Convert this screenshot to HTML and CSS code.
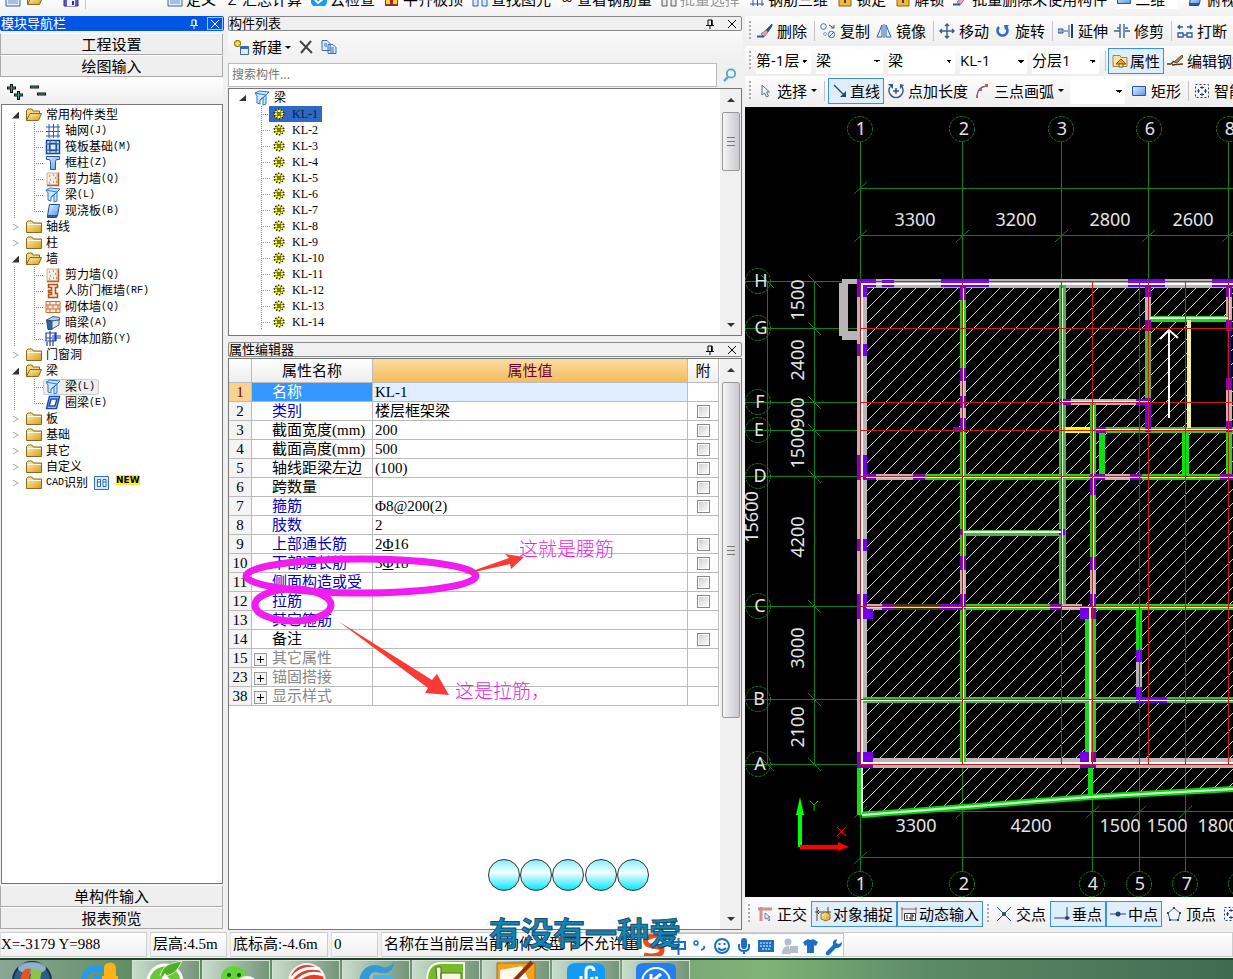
FILE: index.html
```html
<!DOCTYPE html>
<html lang="zh-CN">
<head>
<meta charset="utf-8">
<title>钢筋算量</title>
<link rel="stylesheet" href="styles.css">
</head>
<body>
<svg class="defs" aria-hidden="true">
  <defs>
    <linearGradient id="gold" x1="0" y1="0" x2="1" y2="1"><stop offset="0" stop-color="#fff3b8"/><stop offset="1" stop-color="#d99a1c"/></linearGradient>
    <linearGradient id="sky" x1="0" y1="0" x2="1" y2="1"><stop offset="0" stop-color="#e4f2ff"/><stop offset="1" stop-color="#5b94e2"/></linearGradient>
    <linearGradient id="bubble" x1="0" y1="0" x2="0" y2="1"><stop offset="0" stop-color="#7deefa"/><stop offset=".42" stop-color="#f4ffff"/><stop offset="1" stop-color="#00e4f8"/></linearGradient>
    <pattern id="hatch" width="14" height="14" patternUnits="userSpaceOnUse"><path d="M-1 15L15 -1M-1 1L1 -1M13 15L15 13" stroke="#d0d0d0" stroke-width="1" fill="none" shape-rendering="crispEdges"/></pattern>
    <symbol id="folder" viewBox="0 0 16 14"><path d="M.5 12.500V2.500L2 1h4l1.500 2H15.500v9.500z" fill="url(#gold)" stroke="#8a6a1d"/><path d="M1 4.500h14" stroke="#fff7cf"/></symbol>
    <symbol id="open" viewBox="0 0 16 14"><path d="M.5 12.500V2.500L2 1h4l1 2h6.500v3" fill="#f5d77c" stroke="#8a6a1d"/><path d="M.5 12.500L4 5.500h11.500L12.500 12.500z" fill="url(#gold)" stroke="#8a6a1d"/></symbol>
    <symbol id="gridi" viewBox="0 0 16 16"><path d="M4 1v14M8.500 1v14M13 1v14M1 4h14M1 8.500h14M1 13h14" stroke="#2858b8" fill="none"/></symbol>
    <symbol id="raft" viewBox="0 0 16 16"><path d="M1.500 1.500h13v13h-13zM4.500 4.500h7v7h-7z" fill="#dcecff" stroke="#173f91" stroke-width="1.500"/><path d="M1 5h14M1 11h14M5 1v14M11 1v14" stroke="#2858b8"/></symbol>
    <symbol id="column" viewBox="0 0 16 16"><path d="M1.500 1.500h13v3h-3l-1 2v8h-5v-8l-1-2h-3z" fill="url(#sky)" stroke="#2458ae"/></symbol>
    <symbol id="shear" viewBox="0 0 16 16"><path d="M2 2h10v12H2z" fill="#f6ede3" stroke="#ccb49c"/><path d="M13.500 1.500v13H2" fill="none" stroke="#b95c1c" stroke-width="1.500"/><path d="M4 5h1M8 4h1M10 7h1M5 9h1M8 11h1M4 12h1M11 11h1" stroke="#8a4b2a"/></symbol>
    <symbol id="beam" viewBox="0 0 16 16"><path d="M1 3l4-2 10 1-3 3v9l-3 1V8l-3 2v4l-3-1V6z" fill="#cfe7ff" stroke="#2b78d0"/><path d="M1 3l11 2M6 10l6-5M9 8l3-3" stroke="#2b78d0" fill="none"/></symbol>
    <symbol id="slab" viewBox="0 0 16 16"><path d="M4.500 1.500h10l-2 11h-10z" fill="url(#sky)" stroke="#1c4a9e"/><path d="M2.500 12.500v2h9l1-2" fill="#2c5cb0" stroke="#1c4a9e"/></symbol>
    <symbol id="ring" viewBox="0 0 16 16"><path d="M4.500 1.500h10l-3 12h-10zM6 4l-2 7h6l2-7z" fill="#cfe2ff" stroke="#1549b8" stroke-width="1.500"/></symbol>
    <symbol id="door" viewBox="0 0 16 16"><path d="M3.500 1.500h9v3h-2v6h2v4h-9v-3h3v-2h-3v-2h3v-3h-3z" fill="#fbe7d6" stroke="#b14e17" stroke-width="1.500"/></symbol>
    <symbol id="brick" viewBox="0 0 16 16"><path d="M1 2.500h14v11H1zM1 6h14M1 10h14M5 2v4M11 2v4M8 6v4M3 6v4M13 6v4M5 10v4M11 10v4" fill="#fff0e4" stroke="#cb6a2b"/></symbol>
    <symbol id="hidden" viewBox="0 0 16 16"><path d="M1.500 5L8 1.500l6.500 1V5L7 6z" fill="#b7cde8" stroke="#3d5f90"/><path d="M1.500 5L7 6v8.500H3z" fill="#31619f" stroke="#264a7c"/><path d="M7 6l7-1v5l-7 4z" fill="#dce9f9" stroke="#3d5f90"/></symbol>
    <symbol id="rebar" viewBox="0 0 16 16"><path d="M1 2h9v8H1zM5 0v15M7 5h9M11 1v9M1 7h15M2 15v-4M8 15V8" fill="none" stroke="#1e3fae" stroke-width="1.200"/></symbol>
    <symbol id="book" viewBox="0 0 16 16"><path d="M.5 1.500h14v13H.5z" fill="#d8eaff" stroke="#3d70b8"/><path d="M3.500 4.500h3v7h-3zM9 4.500h3v7H9zM3 7h4M9 7h3" fill="#fff" stroke="#2a66c4"/></symbol>
    <symbol id="gear" viewBox="0 0 12 12"><circle cx="6" cy="6" r="4.800" fill="#ff2" stroke="#222" stroke-width="1.500" stroke-dasharray="1.500 1.500"/><path d="M4.500 2v8M7.500 2v8M2 4.500h8M2 7.500h8" stroke="#554" stroke-width=".6"/><path d="M5 5h2v2H5z" fill="#ff0" stroke="#222" stroke-width=".7"/></symbol>
    <symbol id="pin" viewBox="0 0 10 10"><path d="M3 6V1h4v5M1 6.500h8M5 7v3" fill="none" stroke="currentColor"/><path d="M6 1h1.500v5H6z" fill="currentColor"/></symbol>
    <symbol id="cross" viewBox="0 0 10 10"><path d="M1 1l8 8M9 1L1 9" fill="none" stroke="currentColor"/></symbol>
    <symbol id="eraser" viewBox="0 0 16 16"><path d="M15 1L9 7l2 2 4-6z" fill="#2b4c8d" stroke="#233d70" stroke-width=".7"/><path d="M9 7L4 11l3 3 4-5z" fill="#e8a3b0" stroke="#7f5a6c" stroke-width=".8"/><path d="M0 13.500h7" stroke="#2458ae" stroke-width="2"/></symbol>
    <symbol id="copy" viewBox="0 0 16 16"><circle cx="3.500" cy="3.500" r="2.800" fill="none" stroke="#4f6b92"/><circle cx="11.500" cy="11.500" r="3.200" fill="none" stroke="#4f6b92"/><circle cx="5" cy="11" r="1.500" fill="none" stroke="#8ea3c0"/><path d="M9 2l5 3M14 2v3h-3M9 14l5-5" fill="none" stroke="#35588e"/></symbol>
    <symbol id="mirror" viewBox="0 0 16 16"><path d="M6 2v12H1zM10 2v12h5z" fill="#e3efff" stroke="#2e5cab"/><path d="M8 1v14" stroke="#2e5cab"/></symbol>
    <symbol id="move" viewBox="0 0 16 16"><path d="M8 1v14M1 8h14M6 3l2-2 2 2M6 13l2 2 2-2M3 6L1 8l2 2M13 6l2 2-2 2" fill="none" stroke="#3d5d8c" stroke-width="1.400"/></symbol>
    <symbol id="rotate" viewBox="0 0 16 16"><path d="M4 4a5 5 0 1 0 7 0" fill="none" stroke="#3768bf" stroke-width="2.600"/><path d="M9 2h5l-4 5z" fill="#3768bf"/></symbol>
    <symbol id="extend" viewBox="0 0 16 16"><path d="M0 6h5v4H0zM6 8h4M11 2v12" fill="#99b8e8" stroke="#2d57a5"/><path d="M14 1v14" stroke="#1b3e85" stroke-width="2"/></symbol>
    <symbol id="trim" viewBox="0 0 16 16"><path d="M0 8h6M6 1v14M10 1v14M3 5h3M11 8h5M11 5h3" fill="none" stroke="#3a629f" stroke-width="1.400"/></symbol>
    <symbol id="break" viewBox="0 0 16 16"><path d="M1 4h5M10 4h5M3 2L1 4l2 2M13 2l2 2-2 2M1 10h5v4H1zM10 10h5v4h-5zM6 12h4" fill="none" stroke="#31599b" stroke-width="1.300"/></symbol>
    <symbol id="props" viewBox="0 0 16 16"><path d="M1 2.500h7l1 2h6v9H1z" fill="#f8e3a5" stroke="#ad842e"/><path d="M4 11l5-5 5 5z" fill="#e0a72c" stroke="#745314"/><path d="M7 11h4v3H7z" fill="#fff3c4" stroke="#745314"/></symbol>
    <symbol id="edit" viewBox="0 0 16 16"><path d="M0 11h4l3-3M5 12c4 0 5-1 11-1" fill="none" stroke="#51391e" stroke-width="1.500"/><path d="M15 2l-8 7 3 1 6-6z" fill="#b48a4a" stroke="#493421" stroke-width=".8"/></symbol>
    <symbol id="pointer" viewBox="0 0 16 16"><path d="M5 2v10l2.500-2 2 4 2-1-2-4h3z" fill="#eff5ff" stroke="#5a6f91"/></symbol>
    <symbol id="line" viewBox="0 0 16 16"><path d="M2 2l11 11" stroke="#24457e" stroke-width="1.300"/><path d="M14 8v6H8z" fill="#24457e"/></symbol>
    <symbol id="ptlen" viewBox="0 0 16 16"><path d="M2 4a7 7 0 1 0 12 0M8 5v6M5 8h6" fill="none" stroke="#31548c" stroke-width="1.500"/><path d="M0 1h5v5zM16 2l-4 4V1z" fill="#31548c"/></symbol>
    <symbol id="arc" viewBox="0 0 16 16"><path d="M3 14C3 7 6 4 12 3" fill="none" stroke="#4f6fa0" stroke-width="1.300"/><path d="M2 12h2v3H2zM5 5h3v3H5zM11 1h3v3h-3z" fill="#df5450"/></symbol>
    <symbol id="rect" viewBox="0 0 16 16"><path d="M1.500 3.500h13v9h-13z" fill="url(#sky)" stroke="#2455ad"/></symbol>
    <symbol id="smart" viewBox="0 0 16 16"><path d="M1.500 1.500h13v13h-13z" fill="none" stroke="#223d66" stroke-dasharray="2 2"/><path d="M8 3v3M8 10v3M3 8h3M10 8h3M6 4.500h4M6 11.500h4M4.500 6v4M11.500 6v4" stroke="#223d66"/></symbol>
    <symbol id="ortho" viewBox="0 0 16 16"><path d="M1 3h14M4 1v14" stroke="#d58e8e" stroke-width="3"/><path d="M8 7v6l2-1 2 3 1-1-2-3h2z" fill="#e8effa" stroke="#536d92" stroke-width=".8"/></symbol>
    <symbol id="osnap" viewBox="0 0 16 16"><path d="M2 1v14M13 1v8M0 6h16M4 4L2 6l2 2" fill="none" stroke="#5d4138"/><path d="M6 8l4-2 5 2v5l-4 2-5-2z" fill="url(#gold)" stroke="#9a7321"/></symbol>
    <symbol id="dyn" viewBox="0 0 16 16"><path d="M0 3h16M1 1v13M15 1v7" fill="none" stroke="#a75b5b"/><path d="M3.500 7.500h11v7h-11z" fill="#fff" stroke="#333"/><path d="M6 9v4M9 9h3v2H9v2h3" fill="none" stroke="#111"/></symbol>
    <symbol id="cut" viewBox="0 0 16 16"><path d="M1 1l14 14M15 1L1 15" stroke="#24457e"/><circle cx="8" cy="8" r="2" fill="#24457e"/></symbol>
    <symbol id="perp" viewBox="0 0 16 16"><path d="M0 12h16M13 1v11" stroke="#24457e"/><circle cx="13" cy="12" r="2" fill="#24457e"/></symbol>
    <symbol id="mid" viewBox="0 0 16 16"><path d="M0 8h16" stroke="#24457e"/><circle cx="8" cy="8" r="2.500" fill="#24457e"/></symbol>
    <symbol id="vertex" viewBox="0 0 16 16"><path d="M8 2l6 5-2 7H4L2 7z" fill="none" stroke="#3d5f92"/><path d="M7 1h2v2H7zM13 6h2v2h-2zM1 6h2v2H1zM3 13h2v2H3zM11 13h2v2h-2z" fill="#24457e"/></symbol>
    <symbol id="doc" viewBox="0 0 16 16"><path d="M1 1h14v14H1z" fill="#e6f0fd" stroke="#35609f"/><path d="M3 10h10M3 12h10" stroke="#6b8fc4"/></symbol>
    <symbol id="save" viewBox="0 0 16 16"><path d="M1 1h14v14H1z" fill="#5a5fc4" stroke="#2c3190"/><path d="M4 9h8v6H4z" fill="#eef"/><path d="M9 10h2v4H9z" fill="#2c3190"/></symbol>
    <symbol id="lock" viewBox="0 0 16 16"><path d="M2 5h12v10H2z" fill="#eeb83c" stroke="#8d6514"/><path d="M7 8h2v4H7z" fill="#5b3f08"/></symbol>
    <symbol id="cloud" viewBox="0 0 16 16"><path d="M0 0h16v12l-2 3H2l-2-3z" fill="#1e9be8"/><path d="M4 9l3 3 6-5" fill="none" stroke="#fff" stroke-width="2"/></symbol>
    <symbol id="top" viewBox="0 0 16 16"><path d="M1 3h13v12H1z" fill="#a42d1f"/><path d="M2 8h4v5H2zM9 6h4v7H9z" fill="#ffd33b"/></symbol>
    <symbol id="find" viewBox="0 0 16 16"><path d="M1 3h5v12H1zM10 3h5v12h-5zM6 7h4" fill="#dce9ff" stroke="#2e5cab"/></symbol>
  </defs>
</svg>

<div class="app">
  <header class="menubar">
    <div class="menurow">
      <span class="files"><svg class="i"><use href="#doc"/></svg><svg class="i"><use href="#open"/></svg><svg class="i save"><use href="#save"/></svg><i class="sep"></i></span>
      <button><svg class="i"><use href="#doc"/></svg>定义</button>
      <button><b>Σ</b>汇总计算</button>
      <button><svg class="i"><use href="#cloud"/></svg>云检查</button>
      <button><svg class="i"><use href="#top"/></svg>平齐板顶</button>
      <button><svg class="i"><use href="#find"/></svg>查找图元</button>
      <button><b>∞</b>查看钢筋量</button>
      <button class="off"><svg class="i"><use href="#find"/></svg>批量选择</button>
      <button><svg class="i"><use href="#gridi"/></svg>钢筋三维</button>
      <button><svg class="i"><use href="#lock"/></svg>锁定</button>
      <button><svg class="i"><use href="#lock"/></svg>解锁</button>
      <button><svg class="i"><use href="#eraser"/></svg>批量删除未使用构件</button>
      <button class="view"><svg class="i"><use href="#rect"/></svg>二维</button>
      <button><svg class="i"><use href="#slab"/></svg>俯视</button>
    </div>
  </header>

  <main class="main">
    <aside class="nav">
      <h2 class="title active"><span>模块导航栏</span><svg class="s"><use href="#pin"/></svg><button class="close" aria-label="关闭"><svg class="s"><use href="#cross"/></svg></button></h2>
      <button class="wide">工程设置</button>
      <button class="wide">绘图输入</button>
      <div class="navtools"><svg viewBox="0 0 44 18" width="44" height="18"><path d="M1 5h9M5.500 1v9M8 12h9M12.500 8v9M24 4h9M31 11h9" stroke="#111" stroke-width="3"/><path d="M2 5h7M5.500 2v7M9 12h7M12.500 9v7M25 4h7M32 11h7" stroke="#3fa08a" stroke-width="1"/></svg></div>
      <ul class="tree">
        <li class="g o"><svg class="f"><use href="#open"/></svg>常用构件类型</li>
        <li class="c"><svg class="k"><use href="#gridi"/></svg>轴网<kbd>(J)</kbd></li>
        <li class="c"><svg class="k"><use href="#raft"/></svg>筏板基础<kbd>(M)</kbd></li>
        <li class="c"><svg class="k"><use href="#column"/></svg>框柱<kbd>(Z)</kbd></li>
        <li class="c"><svg class="k"><use href="#shear"/></svg>剪力墙<kbd>(Q)</kbd></li>
        <li class="c"><svg class="k"><use href="#beam"/></svg>梁<kbd>(L)</kbd></li>
        <li class="c last"><svg class="k"><use href="#slab"/></svg>现浇板<kbd>(B)</kbd></li>
        <li class="g"><svg class="f"><use href="#folder"/></svg>轴线</li>
        <li class="g"><svg class="f"><use href="#folder"/></svg>柱</li>
        <li class="g o"><svg class="f"><use href="#open"/></svg>墙</li>
        <li class="c"><svg class="k"><use href="#shear"/></svg>剪力墙<kbd>(Q)</kbd></li>
        <li class="c"><svg class="k"><use href="#door"/></svg>人防门框墙<kbd>(RF)</kbd></li>
        <li class="c"><svg class="k"><use href="#brick"/></svg>砌体墙<kbd>(Q)</kbd></li>
        <li class="c"><svg class="k"><use href="#hidden"/></svg>暗梁<kbd>(A)</kbd></li>
        <li class="c last"><svg class="k"><use href="#rebar"/></svg>砌体加筋<kbd>(Y)</kbd></li>
        <li class="g"><svg class="f"><use href="#folder"/></svg>门窗洞</li>
        <li class="g o"><svg class="f"><use href="#open"/></svg>梁</li>
        <li class="c"><span class="hot"><svg class="k"><use href="#beam"/></svg>梁<kbd>(L)</kbd></span></li>
        <li class="c last"><svg class="k"><use href="#ring"/></svg>圈梁<kbd>(E)</kbd></li>
        <li class="g"><svg class="f"><use href="#folder"/></svg>板</li>
        <li class="g"><svg class="f"><use href="#folder"/></svg>基础</li>
        <li class="g"><svg class="f"><use href="#folder"/></svg>其它</li>
        <li class="g"><svg class="f"><use href="#folder"/></svg>自定义</li>
        <li class="g"><svg class="f"><use href="#folder"/></svg><kbd>CAD</kbd>识别<svg class="k book"><use href="#book"/></svg><em>NEW</em></li>
      </ul>
      <button class="wide">单构件输入</button>
      <button class="wide">报表预览</button>
    </aside>

    <div class="middle">
      <section class="list">
        <h2 class="title"><span>构件列表</span><svg class="s"><use href="#pin"/></svg><button class="close" aria-label="关闭"><svg class="s"><use href="#cross"/></svg></button></h2>
        <div class="listtools">
          <button><svg class="i" viewBox="0 0 16 16"><path d="M4.500 1v7M1 4.500h7" stroke="#9a7a12" stroke-width="4"/><path d="M4.500 2v5M2 4.500h5" stroke="#ffe45c" stroke-width="2"/><path d="M7.500 7.500h8v8h-8z" fill="#dfeaff" stroke="#3b69b4"/><path d="M8 9h7" stroke="#3b69b4" stroke-width="2"/></svg>新建<i class="arr"></i></button>
          <button aria-label="删除"><svg width="14" height="14" viewBox="0 0 14 14"><path d="M1 1l12 12M12 1L2 13" stroke="#444" stroke-width="2" fill="none"/></svg></button>
          <button aria-label="复制"><svg class="i" viewBox="0 0 16 16"><path d="M1 1.500h5l3 3v7H1zM7 5.500h5l3 3v6H7z" fill="#dfecff" stroke="#3b69b4"/><path d="M3 5h3M3 7h3M9 9h4M9 11h4M9 13h4" stroke="#3b69b4"/></svg></button>
        </div>
        <div class="search"><input type="text" aria-label="搜索构件" placeholder="搜索构件..."><button aria-label="搜索"><svg width="14" height="14" viewBox="0 0 14 14"><circle cx="8" cy="5.500" r="4.200" fill="#eefaff" stroke="#4aa5d8" stroke-width="1.800"/><path d="M5 9l-4 4" stroke="#4aa5d8" stroke-width="2.400"/></svg></button></div>
        <div class="listbox">
          <ul class="items">
            <li class="root"><svg class="k"><use href="#beam"/></svg>梁</li>
            <li><span class="sel"><svg class="w"><use href="#gear"/></svg>KL-1</span></li>
            <li><svg class="w"><use href="#gear"/></svg>KL-2</li>
            <li><svg class="w"><use href="#gear"/></svg>KL-3</li>
            <li><svg class="w"><use href="#gear"/></svg>KL-4</li>
            <li><svg class="w"><use href="#gear"/></svg>KL-5</li>
            <li><svg class="w"><use href="#gear"/></svg>KL-6</li>
            <li><svg class="w"><use href="#gear"/></svg>KL-7</li>
            <li><svg class="w"><use href="#gear"/></svg>KL-8</li>
            <li><svg class="w"><use href="#gear"/></svg>KL-9</li>
            <li><svg class="w"><use href="#gear"/></svg>KL-10</li>
            <li><svg class="w"><use href="#gear"/></svg>KL-11</li>
            <li><svg class="w"><use href="#gear"/></svg>KL-12</li>
            <li><svg class="w"><use href="#gear"/></svg>KL-13</li>
            <li><svg class="w"><use href="#gear"/></svg>KL-14</li>
          </ul>
          <div class="bar"><i class="up"></i><span class="thumb short"></span><i class="down"></i></div>
        </div>
      </section>

      <section class="props">
        <h2 class="title"><span>属性编辑器</span><svg class="s"><use href="#pin"/></svg><button class="close" aria-label="关闭"><svg class="s"><use href="#cross"/></svg></button></h2>
        <div class="propbox">
          <table>
            <colgroup><col class="c1"><col class="c2"><col><col class="c4"></colgroup>
            <thead><tr><th></th><th>属性名称</th><th class="val">属性值</th><th>附</th></tr></thead>
            <tbody>
              <tr class="cur"><th>1</th><td>名称</td><td>KL-1</td><td></td></tr>
              <tr class="b"><th>2</th><td>类别</td><td>楼层框架梁</td><td><input type="checkbox" aria-label="类别 附加"></td></tr>
              <tr><th>3</th><td>截面宽度(mm)</td><td>200</td><td><input type="checkbox" aria-label="截面宽度 附加"></td></tr>
              <tr><th>4</th><td>截面高度(mm)</td><td>500</td><td><input type="checkbox" aria-label="截面高度 附加"></td></tr>
              <tr><th>5</th><td>轴线距梁左边</td><td>(100)</td><td><input type="checkbox" aria-label="轴线距梁左边 附加"></td></tr>
              <tr><th>6</th><td>跨数量</td><td></td><td><input type="checkbox" aria-label="跨数量 附加"></td></tr>
              <tr class="b"><th>7</th><td>箍筋</td><td>Φ8@200(2)</td><td><input type="checkbox" aria-label="箍筋 附加"></td></tr>
              <tr class="b"><th>8</th><td>肢数</td><td>2</td><td></td></tr>
              <tr class="b"><th>9</th><td>上部通长筋</td><td>2<u>Φ</u>16</td><td><input type="checkbox" aria-label="上部通长筋 附加"></td></tr>
              <tr class="b"><th>10</th><td>下部通长筋</td><td>3<u>Φ</u>18</td><td><input type="checkbox" aria-label="下部通长筋 附加"></td></tr>
              <tr class="b"><th>11</th><td>侧面构造或受</td><td></td><td><input type="checkbox" aria-label="侧面构造或受 附加"></td></tr>
              <tr class="b"><th>12</th><td>拉筋</td><td></td><td><input type="checkbox" aria-label="拉筋 附加"></td></tr>
              <tr class="b"><th>13</th><td>其它箍筋</td><td></td><td></td></tr>
              <tr><th>14</th><td>备注</td><td></td><td><input type="checkbox" aria-label="备注 附加"></td></tr>
              <tr class="grp"><th>15</th><td><button aria-label="展开"><svg width="9" height="9" viewBox="0 0 9 9"><path d="M1 4.500h7M4.500 1v7" stroke="#000"/></svg></button>其它属性</td><td></td><td></td></tr>
              <tr class="grp"><th>23</th><td><button aria-label="展开"><svg width="9" height="9" viewBox="0 0 9 9"><path d="M1 4.500h7M4.500 1v7" stroke="#000"/></svg></button>锚固搭接</td><td></td><td></td></tr>
              <tr class="grp"><th>38</th><td><button aria-label="展开"><svg width="9" height="9" viewBox="0 0 9 9"><path d="M1 4.500h7M4.500 1v7" stroke="#000"/></svg></button>显示样式</td><td></td><td></td></tr>
            </tbody>
          </table>
          <div class="bar"><i class="up"></i><span class="thumb long"></span><i class="down"></i></div>
        </div>
      </section>
    </div>

    <div class="right">
      <div class="tb">
        <i class="grip"></i>
        <button><svg class="i"><use href="#eraser"/></svg>删除</button><i class="sep"></i>
        <button><svg class="i"><use href="#copy"/></svg>复制</button>
        <button><svg class="i"><use href="#mirror"/></svg>镜像</button><i class="sep"></i>
        <button><svg class="i"><use href="#move"/></svg>移动</button>
        <button><svg class="i"><use href="#rotate"/></svg>旋转</button><i class="sep"></i>
        <button><svg class="i"><use href="#extend"/></svg>延伸</button>
        <button><svg class="i"><use href="#trim"/></svg>修剪</button><i class="sep"></i>
        <button><svg class="i"><use href="#break"/></svg>打断</button>
      </div>
      <div class="tb picks">
        <i class="grip"></i>
        <select class="narrow" aria-label="楼层"><option>第-1层</option></select>
        <select aria-label="构件大类"><option>梁</option></select>
        <select aria-label="构件类型"><option>梁</option></select>
        <select aria-label="构件"><option>KL-1</option></select>
        <select aria-label="分层"><option>分层1</option></select><i class="sep"></i>
        <button class="on"><svg class="i"><use href="#props"/></svg>属性</button>
        <button><svg class="i"><use href="#edit"/></svg>编辑钢筋</button>
      </div>
      <div class="tb">
        <i class="grip"></i>
        <button><svg class="i"><use href="#pointer"/></svg>选择<i class="arr"></i></button><i class="sep"></i>
        <button class="on"><svg class="i"><use href="#line"/></svg>直线</button>
        <button><svg class="i"><use href="#ptlen"/></svg>点加长度</button>
        <button><svg class="i"><use href="#arc"/></svg>三点画弧<i class="arr"></i></button>
        <select class="narrow" aria-label="画弧方式"><option></option></select>
        <button><svg class="i"><use href="#rect"/></svg>矩形</button><i class="sep"></i>
        <button><svg class="i"><use href="#smart"/></svg>智能布置</button>
      </div>

      <div class="canvas">
        <svg class="cad" role="img" aria-label="梁平面图">
          <g transform="translate(-745 -107)">
            <g class="axis">
              <path d="M860.500 142V872M962.500 142V872M1061.500 142V282M1148.500 142V282M1228.500 142V282M1092.500 764V872M1139.500 764V872M1185.500 764V872"/>
              <path d="M860 188.500H2400M860 235.500H2400M860 811.500H2400M860 857.500H2400"/>
              <path d="M745 281.500H860M745 328.500H860M745 402.500H860M745 430.500H860M745 476.500H860M745 606.500H860M745 699.500H860M745 764.500H860M767.500 281V764M814.500 281V764"/>
              <path d="M854 194l13-12M854 242l13-12M956 242l13-12M1055 242l13-12M1142 242l13-12M1222 242l13-12M854 818l13-12M956 818l13-12M1086 818l13-12M1133 818l13-12M1179 818l13-12M854 864l13-12"/>
              <path d="M808 275l13 13M808 322l13 13M808 396l13 13M808 424l13 13M808 470l13 13M808 600l13 13M808 693l13 13M808 758l13 13M761 275l13 13M761 758l13 13"/>
              <g class="rings"><circle cx="860" cy="129" r="12.500"/><circle cx="962" cy="129" r="12.500"/><circle cx="1061" cy="129" r="12.500"/><circle cx="1149" cy="129" r="12.500"/><circle cx="1229" cy="129" r="12.500"/>
              <circle cx="860" cy="884" r="12.500"/><circle cx="962" cy="884" r="12.500"/><circle cx="1092" cy="884" r="12.500"/><circle cx="1139" cy="884" r="12.500"/><circle cx="1185" cy="884" r="12.500"/><circle cx="1241" cy="884" r="12.500"/>
              <circle cx="758" cy="281" r="12.500"/><circle cx="758" cy="328" r="12.500"/><circle cx="758" cy="402" r="12.500"/><circle cx="758" cy="430" r="12.500"/><circle cx="758" cy="476" r="12.500"/><circle cx="758" cy="606" r="12.500"/><circle cx="758" cy="699" r="12.500"/><circle cx="758" cy="764" r="12.500"/></g>
            </g>
            <path d="M863 284H1233V789L1090 797L863 815z" fill="url(#hatch)"/>
            <path d="M1190 322h37v106h-37z" fill="#000"/>
            <g class="gray">
              <path d="M842 279h18v5h-18zM839 283h9v53h-9zM842 331h16v9h-16z"/>
              <path d="M857 279h10v486h-10zM857 279h376v9H857zM857 758h376v10H857z"/>
              <path d="M960 381h6v37h-6zM960 569h6v26h-6zM1145 297h6v24h-6zM1226 297h6v24h-6zM1226 389h6v34h-6zM1060 399h90v6h-90zM866 474h50v6h-50zM1104 474h28v6h-28zM866 604h20v6h-20zM1060 604h22v6h-22zM1090 569h6v26h-6zM1136 661h6v28h-6z"/>
            </g>
            <g class="green">
              <path d="M960 300h6v68h-6zM960 432h6v124h-6zM960 609h6v153h-6zM1090 403h6v72h-6zM1090 495h6v62h-6zM1085 619h11v133h-11zM1088 768h5v28h-5zM1099 433h6v42h-6zM1150 316h78v6h-78zM1226 432h6v42h-6zM1182 432h7v42h-7zM925 474h165v6H925zM1142 474h78v6h-78zM963 604h88v6h-88zM1096 604h137v6h-137zM1136 610h6v40h-6zM857 768h6v47h-6z"/>
            </g>
            <g class="moss"><path d="M1059 284h7v320h-7zM1145 331h6v67h-6zM1106 427h127v6h-127zM963 530h98v6h-98zM863 697h370v6H863z"/></g>
            <path d="M894 604h47v6h-47z" fill="#1d4a00"/>
            <path d="M1065 427h25v6h-25z" fill="#ff0"/>
            <path d="M1187 320h4v108h-4z" fill="#f4f09a"/>
            <path d="M1227 331h4v47h-4z" fill="#180090"/>
            <g class="purple">
              <path d="M857 281h10v16h-10zM857 344h10v12h-10zM857 455h10v25h-10zM857 539h10v12h-10zM857 594h10v25h-10zM863 609h10v10h-10zM857 752h16v10h-16zM857 762h16v6h-16z"/>
              <path d="M857 279h19v8h-19zM882 280h12v7h-12zM941 279h48v8h-48zM1128 279h37v8h-37zM1212 279h21v8h-21z"/>
              <path d="M960 287h6v13h-6zM960 368h6v13h-6zM960 396h6v12h-6zM960 418h6v14h-6zM953 427h8v5h-8zM960 556h6v14h-6zM960 594h6v15h-6zM1145 287h6v10h-6zM1145 320h6v11h-6zM1145 398h6v34h-6zM1226 287h6v10h-6zM1226 320h6v11h-6zM1226 378h6v12h-6zM1226 421h6v11h-6z"/>
              <path d="M1060 399h11v6h-11zM1136 399h14v6h-14zM1096 427h10v6h-10zM867 474h9v6h-9zM913 474h12v6h-12zM1090 474h15v6h-15zM1130 474h12v6h-12zM1220 474h13v6h-13zM1090 475h6v20h-6zM1090 557h6v13h-6zM1090 594h6v25h-6zM1080 608h16v11h-16zM1080 752h16v16h-16zM882 604h12v6h-12zM940 604h23v6h-23zM1050 604h12v6h-12zM1136 650h6v12h-6zM1136 687h6v14h-6zM1136 697h31v6h-31zM1059 529h6v6h-6zM960 529h3v6h-3z"/>
            </g>
            <g class="white">
              <path d="M862 284H1233M862 283V763H1233M862 768V814M1090 608V762M1150 318H1228M963 532H1061" class="double"/>
              <path d="M963.500 288V763M1062.500 288V604M1148.500 288V430M1229.500 288V320M1093.500 405V606M1060 401.500H1150M1096 429.500H1233M866 477.500H1233M866 607.500H1233M863 700.500H1233M1139.500 608V700M1185.500 433V475"/>
            </g>
            <path class="red" d="M860.500 281V764M962.500 281V764M1061.500 281V764M1092.500 281V764M1139.500 281V764M1148.500 281V764M1185.500 281V764M1228.500 281V764M860 281.500H1233M860 328.500H1233M860 402.500H1233M860 430.500H1233M860 476.500H1233M860 606.500H1233M860 699.500H1233M860 764.500H1233"/>
            <path d="M862 815L1090 797L1233 789" fill="none" stroke="#00e000" stroke-width="6"/><path d="M862 815L1090 797L1233 789" fill="none" stroke="#eafff0" stroke-width="2"/>
            <path d="M1169 418V330M1160 339L1169 330L1178 338" fill="none" stroke="#fff" stroke-width="2"/>
            <path d="M798 847V815h-2l4-18 4 18h-2V847z" fill="#0f0"/><path d="M800 845H838v-3l11 5-11 4v-2H800z" fill="#f00"/>
            <path d="M810 801l4 4 4-4M814 805v6" fill="none" stroke="#0c0"/><path d="M837 827l9 9M846 827l-9 9" fill="none" stroke="#f00"/>
            <g class="dims">
              <text x="861" y="135">1</text><text x="964" y="135">2</text><text x="1062" y="135">3</text><text x="1150" y="135">6</text><text x="1230" y="135">8</text>
              <text x="915" y="226">3300</text><text x="1016" y="226">3200</text><text x="1110" y="226">2800</text><text x="1193" y="226">2600</text>
              <text x="916" y="832">3300</text><text x="1031" y="832">4200</text><text x="1120" y="832">1500</text><text x="1167" y="832">1500</text><text x="1218" y="832">1800</text>
              <text x="861" y="890">1</text><text x="964" y="890">2</text><text x="1093" y="890">4</text><text x="1140" y="890">5</text><text x="1187" y="890">7</text>
              <text x="761" y="287">H</text><text x="761" y="334">G</text><text x="760" y="408">F</text><text x="759" y="436">E</text><text x="760" y="482">D</text><text x="760" y="612">C</text><text x="759" y="705">B</text><text x="760" y="770">A</text>
              <text transform="translate(804 300) rotate(-90)">1500</text><text transform="translate(804 360) rotate(-90)">2400</text><text transform="translate(804 413) rotate(-90)">900</text><text transform="translate(804 448) rotate(-90)">1500</text><text transform="translate(804 537) rotate(-90)">4200</text><text transform="translate(804 648) rotate(-90)">3000</text><text transform="translate(804 727) rotate(-90)">2100</text><text transform="translate(758 517) rotate(-90)">15600</text>
            </g>
          </g>
        </svg>
      </div>

      <div class="tb snap">
        <i class="grip"></i>
        <button><svg class="i"><use href="#ortho"/></svg>正交</button>
        <div class="pair"><button class="on"><svg class="i"><use href="#osnap"/></svg>对象捕捉</button><button class="on"><svg class="i"><use href="#dyn"/></svg>动态输入</button></div>
        <i class="grip"></i>
        <button><svg class="i"><use href="#cut"/></svg>交点</button>
        <div class="pair"><button class="on"><svg class="i"><use href="#perp"/></svg>垂点</button><button class="on"><svg class="i"><use href="#mid"/></svg>中点</button></div>
        <button><svg class="i"><use href="#vertex"/></svg>顶点</button>
        <button><svg class="i"><use href="#smart"/></svg>坐标</button>
      </div>
    </div>
  </main>

  <footer class="status">
    <span class="xy">X=-3179 Y=988</span><span class="fl">层高:4.5m</span><span class="el">底标高:-4.6m</span><span class="n">0</span><span class="msg">名称在当前层当前构件类型下不允许重</span>
  </footer>

  <nav class="taskbar" aria-label="任务栏">
    <button class="plain start" aria-label="开始"><svg width="42" height="21" viewBox="0 0 42 21"><circle cx="21" cy="22" r="19" fill="#2c5f86" stroke="#14354f" stroke-width="2"/><ellipse cx="21" cy="9" rx="14" ry="6" fill="#b9d6e6" opacity=".7"/><path d="M12 12c3-3 6-3 8-2l-2 11h-9z" fill="#e8541f"/><path d="M21 10c4 2 7 2 10 0l-2 11H19z" fill="#8cc63e"/></svg></button>
    <button class="plain" aria-label="浏览器"><svg width="42" height="21" viewBox="0 0 42 21"><path d="M28 9C18 2 5 8 4 21h6c1-8 8-10 15-6z" fill="#259bea"/><path d="M17 16h12v5H17z" fill="#259bea"/><path d="M27 17V9c0-7 12-7 12 0v8h2v3H25v-3z" fill="#ffb115"/></svg></button>
    <button aria-label="应用"><svg width="42" height="21" viewBox="0 0 42 21"><circle cx="20" cy="22" r="17" fill="#6bc53a" stroke="#fff" stroke-width="3"/><path d="M15 16C18 5 25 3 37 1c-5 10-8 14-18 15" fill="#4fae2c" stroke="#d7f3bd"/><path d="M15 21l5-8 6 8z" fill="#fff"/></svg></button>
    <button aria-label="微信"><svg width="42" height="21" viewBox="0 0 42 21"><ellipse cx="19" cy="18" rx="13" ry="12" fill="#65d43a"/><circle cx="14" cy="15" r="2" fill="#174d10"/><circle cx="24" cy="15" r="2" fill="#174d10"/><ellipse cx="32" cy="24" rx="10" ry="8" fill="#f4f4f4"/></svg></button>
    <button aria-label="应用"><svg width="42" height="21" viewBox="0 0 42 21"><circle cx="22" cy="22" r="18" fill="#d9412b" stroke="#eee" stroke-width="2"/><path d="M6 19C14 9 22 7 35 9M11 22C18 14 28 11 38 15" fill="none" stroke="#fff" stroke-width="3"/></svg></button>
    <button aria-label="应用"><svg width="42" height="21" viewBox="0 0 42 21"><path d="M4 21C6 7 17 2 28 7c4 1 7-1 11-4-1 10-9 12-18 9-5 0-7 4-7 9z" fill="#3499d5"/><path d="M18 15h20v6H18z" fill="#56afd9"/></svg></button>
    <button aria-label="应用"><svg width="42" height="21" viewBox="0 0 42 21"><path d="M2 21C2 8 8 3 16 3h23v18z" fill="#78b929" stroke="#f4ffe8" stroke-width="2"/><path d="M11 7h5v14h-4zM16 13h20v8H16z" fill="#f3f7df" stroke="#486e1c"/></svg></button>
    <button aria-label="应用"><svg width="42" height="21" viewBox="0 0 42 21"><path d="M2 3h38v18H2z" fill="#f5a11b" stroke="#b66a09"/><path d="M5 10l22-4 7 15H5z" fill="#fffaf0"/><path d="M37 2L19 21" stroke="#8c3111" stroke-width="4"/></svg></button>
    <button aria-label="应用"><svg width="42" height="21" viewBox="0 0 42 21"><path d="M2 21V11q0-8 9-8h20q9 0 9 8v10z" fill="#139bf4"/><path d="M16 21v-5M21 21V11q0-4 4-4t4 4M27 21v-4M33 18h-3" fill="none" stroke="#fff" stroke-width="3"/></svg></button>
    <button aria-label="应用"><svg width="42" height="21" viewBox="0 0 42 21"><path d="M1 21V9q0-6 8-6h24q8 0 8 6v12z" fill="#237ff0"/><circle cx="21" cy="22" r="14" fill="none" stroke="#fff" stroke-width="2"/><path d="M16 14v7M26 14l-9 7" stroke="#fff" stroke-width="3"/></svg></button>
  </nav>

  <svg class="notes" role="img" aria-label="批注">
    <ellipse cx="361" cy="576" rx="115" ry="17" class="loop"/><ellipse cx="293" cy="605" rx="38" ry="16" class="loop"/>
    <path d="M461 575L509 558L505 554L524 557L511 569L510 564z" fill="#fa3a34"/><path d="M338 621L432 680L437 674L449 695L425 693L428 688z" fill="#fa3a34"/>
    <text x="519" y="556">这就是腰筋</text><text x="455" y="698">这是拉筋，</text>
    <g fill="url(#bubble)" stroke="#333"><circle cx="504" cy="875" r="15.500"/><circle cx="536" cy="875" r="15.500"/><circle cx="568" cy="875" r="15.500"/><circle cx="601" cy="875" r="15.500"/><circle cx="633" cy="875" r="15.500"/></g>
  </svg>
  <div class="ime">
    <svg width="203" height="22" viewBox="0 0 203 22"><path d="M26 3C15-1 3 3 6 9s16 1 16 7-10 7-18 5" fill="none" stroke="#f04a13" stroke-width="5"/>
      <g fill="none" stroke="#1d6fc0" stroke-width="2"><path d="M32 8h13v7H32zM38.500 4v17"/><circle cx="56" cy="9" r="2" stroke-width="1.500"/><path d="M64 12q1 3-3 4"/><circle cx="82" cy="12" r="7"/><path d="M78 14q4 4 8 0M79.500 9v2M84.500 9v2M99 10v3q0 4 5 4t5-4v-3M104 17v3"/></g>
      <path d="M101 7q0-3 3-3t3 3v5q0 3-3 3t-3-3zM118 6h16v12h-16z" fill="#1d6fc0"/><path d="M120 9h12M120 12h12M122 15h8" stroke="#fff" stroke-dasharray="2 1"/>
      <g fill="#b4bfca"><circle cx="148" cy="8" r="3.500"/><path d="M142 20q0-8 7-8l2 8zM150 12h8v7h-8z"/></g>
      <path d="M163 8l5-3q3 2 5 0l5 3-2 4-2-1v8h-7v-8l-2 1z" fill="#1d6fc0"/><path d="M186 18l7-7q-1-5 4-6l-1 4 3 1 3-2q0 6-6 6l-7 7q-4 1-3-3z" fill="#1d6fc0"/></svg>
  </div>
  <p class="lyric">有没有一种爱</p>
</div>
</body>
</html>
```
FILE: styles.css
```css
* { box-sizing: border-box; }
body { margin: 0; background: #f0f0f0; color: #000; font: 15px/20px "Open Sans", "Noto Sans CJK SC", sans-serif; }
button, input, select { font: inherit; color: inherit; }
button { display: inline-flex; align-items: center; gap: 4px; margin: 0; padding: 0; border: 0; background: none; white-space: nowrap; }
ul, h2, p { margin: 0; padding: 0; list-style: none; font-weight: 400; }
svg { display: block; flex: none; }
.defs { position: absolute; width: 0; height: 0; }
.i { width: 16px; height: 16px; }
.s { width: 10px; height: 10px; }
.app { position: relative; display: flex; flex-direction: column; min-height: 100vh; overflow: hidden; }

.menubar { height: 16px; overflow: hidden; background: linear-gradient(#fdfdfd, #f0f0f0); }
.menurow { display: flex; gap: 9px; margin-top: -11px; padding-left: 5px; }
.menurow button { gap: 3px; flex: none; }
.menurow b { width: 14px; font-weight: 400; }
.files { display: flex; flex: none; align-items: center; gap: 6px; width: 153px; }
.files .save { margin-left: 14px; }
.off { color: #999; filter: grayscale(1); }
.view { padding-right: 13px; background: #fff; }
.sep { width: 1px; height: 20px; flex: none; background: #c4c4c4; }
.arr { border: 3px solid transparent; border-top-color: #000; border-bottom: 0; }

.main { flex: 1; display: flex; }
.nav { width: 224px; margin-right: 4px; padding-bottom: 2px; display: flex; flex-direction: column; }
.title { display: flex; align-items: center; gap: 12px; height: 15px; padding-right: 4px; border: 1px solid #888; border-radius: 2px; font: 13px/13px "Liberation Serif", "Noto Sans CJK SC", sans-serif; }
.title span { flex: 1; }
.title.active { gap: 8px; background: #0055e5; border-color: #0055e5; color: #fff; padding-right: 0; margin-bottom: 2px; }
.active .close { width: 16px; height: 13px; justify-content: center; border: 1px solid #a9c7ff; }
.wide { justify-content: center; height: 22px; margin-right: 1px; padding-bottom: 1px; border: 1px solid #aaa; border-top-color: #fff; background: #efefef; font-family: "Noto Sans CJK SC", sans-serif; }
.navtools { height: 27px; padding: 6px; background: linear-gradient(#fff, #eee); margin-right: 1px; }
.tree { flex: 1; margin: 0 1px 1px; padding: 2px 0; border: 1px solid #777; background: #fff; font: 12px/16px "Liberation Serif", "Noto Sans CJK SC", sans-serif; }
.tree li { display: flex; align-items: center; height: 16px; }
.tree kbd { font: 10px/16px "Liberation Mono", monospace; }
.f { width: 16px; height: 14px; margin-right: 4px; }
.k { width: 16px; height: 16px; margin-right: 4px; }
.g::before { content: ""; width: 7px; height: 7px; margin: 0 7px 0 10px; background: #aaa; clip-path: polygon(15% 0, 100% 50%, 15% 100%, 15% 85%, 75% 50%, 15% 15%); }
.g.o::before { background: #333; clip-path: polygon(100% 0, 100% 100%, 0 100%); }
.c { background: repeating-linear-gradient(90deg, #888 0 1px, transparent 1px 2px) 32px 8px / 10px 1px no-repeat, repeating-linear-gradient(#888 0 1px, transparent 1px 2px) 12px 0 / 1px 100% no-repeat, repeating-linear-gradient(#888 0 1px, transparent 1px 2px) 32px 0 / 1px 100% no-repeat; padding-left: 43px; }
.c.last { background-size: 10px 1px, 1px 100%, 1px 8px; }
.hot { display: flex; margin-left: -2px; padding: 0 4px 0 2px; border-radius: 3px; background: #eee; box-shadow: 0 0 0 1px #ccc inset; }
.tree .book { margin: 0 6px; }
.tree em { align-self: flex-start; font: bold 9px/10px "DejaVu Sans", sans-serif; background: #ffe92a; }

.middle { width: 514px; display: flex; flex-direction: column; gap: 6px; }
.list { display: flex; flex-direction: column; height: 320px; }
.listtools { display: flex; align-items: center; gap: 8px; height: 32px; padding: 0 5px; background: linear-gradient(#fafafa, #efefef); }
.listtools button { gap: 3px; }
.search { display: flex; height: 24px; margin-bottom: 1px; }
.search input { flex: 1; min-width: 0; border: 1px solid #bbb; padding: 0 3px 3px; background: #fff; font: 12px/18px "Noto Sans CJK SC", sans-serif; outline: 0; }
.search button { width: 25px; justify-content: center; }
.listbox, .propbox { flex: 1; display: flex; min-height: 0; border: 1px solid #777; background: #fff; }
.items { flex: 1; padding-top: 1px; font: 12px/16px "Liberation Serif", "Noto Sans CJK SC", sans-serif; }
.items li { display: flex; align-items: center; height: 16px; padding-left: 44px; background: repeating-linear-gradient(#888 0 1px, transparent 1px 2px) 32px 0 / 1px 100% no-repeat, repeating-linear-gradient(90deg, #888 0 1px, transparent 1px 2px) 32px 8px / 10px 1px no-repeat; }
.items .root { padding-left: 10px; background: none; }
.root::before { content: ""; width: 7px; height: 6px; margin-right: 8px; background: #333; clip-path: polygon(100% 0, 100% 100%, 0 100%); }
.w { width: 12px; height: 12px; margin-right: 7px; }
.sel { display: flex; align-items: center; margin-left: -4px; padding: 0 4px; background: #3069c4; color: #001a50; }
.bar { display: flex; flex-direction: column; align-items: center; width: 21px; padding: 9px 0 8px; background: #f0f0f0; }
.up { border: 4px solid transparent; border-bottom-color: #333; border-top: 0; }
.down { margin-top: auto; border: 4px solid transparent; border-top-color: #333; border-bottom: 0; }
.thumb { width: 18px; margin-top: 10px; border: 1px solid #999; border-radius: 2px; background: linear-gradient(#777, #777) center calc(50% - 4px) / 8px 1px no-repeat, linear-gradient(#777, #777) center / 8px 1px no-repeat, linear-gradient(#777, #777) center calc(50% + 4px) / 8px 1px no-repeat, linear-gradient(90deg, #f5f5f5, #c8c8ce); }
.short { height: 59px; }
.long { height: 336px; }

.props { flex: 1; display: flex; flex-direction: column; gap: 1px; padding-bottom: 1px; }
table { flex: 1; align-self: flex-start; margin-right: 1px; border-collapse: separate; border-spacing: 0; table-layout: fixed; font: 15px/16px "Liberation Serif", "Noto Sans CJK SC", sans-serif; }
.c1 { width: 23px; } .c2 { width: 121px; } .c4 { width: 31px; }
th, td { height: 19px; padding: 0 2px; border: 1px solid #bbb; border-width: 0 1px 1px 0; font-weight: 400; text-align: left; white-space: nowrap; }
th { padding: 0; text-align: center; background: #f4f4f4; }
thead th { height: 24px; background: linear-gradient(#fff, #eee); }
thead .val { background: linear-gradient(#fbdca0, #f3bd5c); color: #700030; }
td:nth-child(2) { padding-left: 20px; }
td:nth-child(4) { text-align: center; line-height: 0; }
.b td:nth-child(2) { color: #0000c8; }
.cur th { background: #fbd28d; color: #700030; }
.cur td:nth-child(2) { background: #3399ff; color: #fff; }
.cur td:nth-child(3) { background: #e0efff; }
td input { appearance: none; width: 13px; height: 13px; margin: 0; border: 1px solid #888; background: linear-gradient(135deg, #ccc, #fff); box-shadow: 0 0 0 1px #fff inset; vertical-align: middle; }
.grp td:nth-child(2) { padding-left: 2px; color: #888; }
.grp button { justify-content: center; width: 13px; height: 13px; margin-right: 5px; border: 1px solid #999; background: #f4f4f4; vertical-align: -1px; }

.right { flex: 1; min-width: 0; margin-left: 3px; display: flex; flex-direction: column; overflow: hidden; }
.tb { display: flex; align-items: center; gap: 6px; height: 30px; flex: none; padding-left: 4px; background: linear-gradient(#fdfdfd, #eee); overflow: hidden; }
.tb button { height: 26px; padding-bottom: 1px; }
.tb .sep { margin: 0 -1px 0 1px; }
.grip { flex: none; width: 2px; height: 20px; background: repeating-linear-gradient(#aaa 0 2px, transparent 2px 4px); }
.tb .on { padding: 0 3px 1px; border: 1px solid #3c8fe0; background: #dfeefb; margin: 0 -2px; gap: 2px; }
.picks { gap: 5px; }
.tb select { flex: none; width: 67px; height: 25px; padding: 0 12px 2px 0; border: 0; appearance: none; outline: 0; background: linear-gradient(45deg, transparent 50%, #000 50%) right 6px top 11px / 3px 3px no-repeat, linear-gradient(-45deg, transparent 50%, #000 50%) right 3px top 11px / 3px 3px no-repeat, #fff; }
.tb select.narrow { width: 55px; }
.canvas { flex: 1; min-height: 0; margin-top: 1px; background: #000; display: flex; overflow: hidden; }
.cad { width: 100%; height: auto; }
.tb.snap { height: 34px; gap: 7px; padding-left: 3px; }
.snap .on { margin: 0 -3px; }
.pair { display: flex; gap: 6px; }

.axis { stroke: #108018; fill: none; }
.rings { stroke-dasharray: 3 1; }
.gray { fill: #b8b4b8; }
.green { fill: #10e010; }
.moss { fill: #48b838; }
.purple { fill: #7400e8; }
.white { fill: none; stroke: #fff; }
.double { stroke-width: 2; }
.red { fill: none; stroke: #d01818; shape-rendering: crispEdges; }
.dims { fill: #e4e4e4; font: 18px "Noto Sans", sans-serif; text-anchor: middle; }

.status { display: flex; gap: 3px; height: 27px; padding: 1px 0; background: #f0f0f0; font: 15px/22px "Liberation Serif", "Noto Sans CJK SC", sans-serif; }
.status span { padding: 0 2px; border: 1px solid #ccc; border-left-color: #ddd; background: linear-gradient(#fff, #f0f0f0); white-space: nowrap; }
.status .xy { padding-left: 0; }
.xy { width: 147px; } .fl { width: 77px; } .el { width: 98px; } .n { width: 47px; }
.status .msg { flex: 1; }
.taskbar { display: flex; height: 21px; overflow: hidden; border-top: 2px solid #24402c; background: linear-gradient(90deg, #8aa795, #5d8a5c 12%, #76987b 45%, #7fb375 62%, #5c8b68 75%, #3f6c50); }
.taskbar button { width: 68px; margin-right: 2px; flex: none; justify-content: center; border: 1px solid #d2e2d4; border-bottom: 0; background: linear-gradient(90deg, #c9dccb, #74957a); }
.taskbar .plain { width: 64px; border: 0; background: none; }

.notes { position: absolute; inset: 0; width: 100%; height: 100%; pointer-events: none; }
.notes text { fill: #e81ee8; font: 19px "Noto Sans CJK SC", sans-serif; font-weight: 300; }
.loop { fill: none; stroke: #f01cf0; stroke-width: 7; }
.ime { position: absolute; left: 640px; bottom: 22px; border: 1px solid #b8c4d8; border-left: 0; background: #fcfdff; }
.lyric { position: absolute; left: 489px; bottom: 28px; color: #0f86b8; font: bold 32px/40px "Noto Sans CJK SC", sans-serif; -webkit-text-stroke: 1px #1d4a66; }
```
